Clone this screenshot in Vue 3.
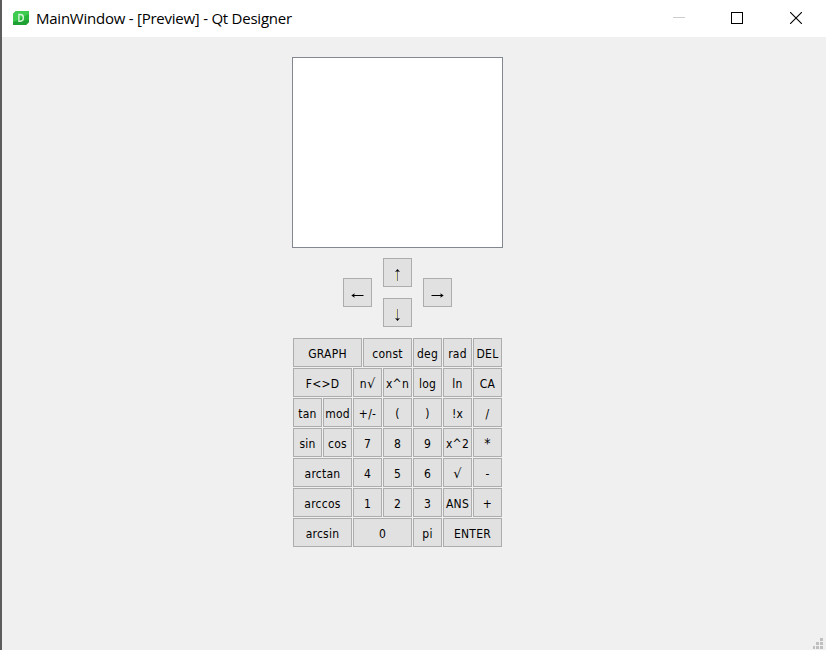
<script setup>
const keys = [
  ['GRAPH', 7], ['const', 5], ['deg', 3], ['rad', 3], ['DEL', 3],
  ['F<>D', 6], ['n√', 3], ['x^n', 3], ['log', 3], ['ln', 3], ['CA', 3],
  ['tan', 3], ['mod', 3], ['+/-', 3], ['(', 3], [')', 3], ['!x', 3], ['/', 3],
  ['sin', 3], ['cos', 3], ['7', 3], ['8', 3], ['9', 3], ['x^2', 3], ['*', 3],
  ['arctan', 6], ['4', 3], ['5', 3], ['6', 3], ['√', 3], ['-', 3],
  ['arccos', 6], ['1', 3], ['2', 3], ['3', 3], ['ANS', 3], ['+', 3],
  ['arcsin', 6], ['0', 6], ['pi', 3], ['ENTER', 6],
]
</script>

<template>
  <div class="window">
    <header class="titlebar">
      <svg class="logo" width="16" height="14" viewBox="0 0 16 14">
        <path d="M3 0H16V11L13 14H0V3Z" fill="#28b53c" />
        <path d="M3 0H16V3L0 11V3Z" fill="#3dcc50" />
        <path d="M0 11L16 9V11L13 14H0Z" fill="#1fa033" />
        <path d="M5.9 3.5H7.6Q10.4 3.5 10.4 6.8T7.6 10.2H5.9Z" fill="none" stroke="#d4f4d7" stroke-width="1.4" />
      </svg>
      <span class="title">MainWindow - [Preview] - Qt Designer</span>
      <div class="controls">
        <svg width="12" height="12" viewBox="0 0 12 12"><path d="M0 5.5H12" stroke="#ccc" /></svg>
        <svg width="12" height="12" viewBox="0 0 12 12"><rect x=".5" y=".5" width="11" height="11" fill="none" stroke="#000" /></svg>
        <svg class="close" width="12" height="12" viewBox="0 0 12 12"><path d="M0 0L12 12M12 0L0 12" stroke="#000" stroke-width="1.1" /></svg>
      </div>
    </header>
    <main class="body">
      <div class="display"></div>
      <div class="arrows">
        <button class="key up"><svg width="13" height="13" viewBox="0 0 13 13"><path d="M6.5 12V1" stroke="#77779a" /><path d="M5.5 12V3" stroke="#e9e39c" /><path d="M6.5 0L9 2.9L6.5 2.2L4 2.9Z" /></svg></button>
        <button class="key left"><svg width="13" height="13" viewBox="0 0 13 13"><path d="M1 6.5H12.5" stroke="#000" /><path d="M.3 6.5L3.7 4.3L3.1 6.5L3.7 8.7Z" /></svg></button>
        <button class="key right"><svg width="13" height="13" viewBox="0 0 13 13"><path d="M.5 6.5H12" stroke="#000" /><path d="M12.7 6.5L9.3 4.3L9.9 6.5L9.3 8.7Z" /></svg></button>
        <button class="key down"><svg width="13" height="13" viewBox="0 0 13 13"><path d="M6.5 0V11" stroke="#77779a" /><path d="M5.5 0V9" stroke="#e9e39c" /><path d="M6.5 12L9 9.1L6.5 9.8L4 9.1Z" /></svg></button>
      </div>
      <div class="keypad">
        <button v-for="([label, span]) in keys" :key="label" class="key" :class="'span-' + span">
          <span v-if="label.endsWith('√')">{{ label.slice(0, -1) }}<b class="root">√</b></span>
          <span v-else :class="{ star: label === '*' }">{{ label }}</span>
        </button>
      </div>
    </main>
    <svg class="grip" width="10" height="11" viewBox="0 0 10 11" fill="#bfbfbf">
      <path d="M7 0h3v3h-3zM3 4h3v3h-3zM7 4h3v3h-3zM0 8h2v3h-2zM3 8h3v3h-3zM7 8h3v3h-3z" />
    </svg>
  </div>
</template>

<style>
body { margin: 0; overflow: hidden; }
</style>

<style scoped>
.window {
  position: relative;
  box-sizing: border-box;
  width: 826px;
  height: 650px;
  border-left: 2px solid #5c5c5c;
  background: #f0f0f0;
}
.titlebar {
  display: flex;
  align-items: center;
  box-sizing: border-box;
  height: 37px;
  padding: 0 24px 0 11px;
  background: #fff;
}
.logo { margin-top: -1px; }
.title {
  margin: -2px 0 0 7px;
  font: 15px/20px "Open Sans", sans-serif;
  letter-spacing: -0.24px;
  color: #000;
  white-space: nowrap;
}
.controls { display: flex; gap: 46px; margin: 0 0 1px auto; }
.controls svg { display: block; }
.controls .close { margin-left: 1px; }
.body {
  display: flex;
  flex-direction: column;
  align-items: flex-start;
  padding: 20px 0 0 290px;
}
.display {
  box-sizing: border-box;
  width: 211px;
  height: 191px;
  border: 1px solid #828790;
  background: #fff;
}
.arrows {
  display: grid;
  grid-template-columns: repeat(3, 29px);
  grid-template-rows: 20px 9px 11px 9px 20px;
  column-gap: 11px;
  margin: 10px 0 0 51px;
}
.up { grid-area: 1 / 2 / 3 / 3; }
.left { grid-area: 2 / 1 / 5 / 2; }
.right { grid-area: 2 / 3 / 5 / 4; }
.down { grid-area: 4 / 2 / 6 / 3; }
.arrows svg { display: block; margin-top: 6px; }
.keypad {
  display: grid;
  grid-template-columns: repeat(21, 10px);
  grid-auto-rows: 29px;
  row-gap: 1px;
  margin: 11px 0 0 1px;
}
.key {
  display: flex;
  align-items: center;
  justify-content: center;
  box-sizing: border-box;
  height: 29px;
  padding: 0;
  border: 1px solid #adadad;
  border-radius: 0;
  background: #e1e1e1;
  color: #000;
  font: 12px/16px "DejaVu Sans Condensed", "DejaVu Sans", sans-serif;
  font-stretch: condensed;
  letter-spacing: 0.25px;
  white-space: nowrap;
}
.keypad .key { margin-right: 1px; }
.key span { margin-top: 2px; }
.key .root {
  font: 13px/14px "DejaVu Sans", sans-serif;
  letter-spacing: 0;
}
.key .star { margin-top: 0; font-size: 14px; }
.span-3 { grid-column: span 3; }
.span-5 { grid-column: span 5; }
.span-6 { grid-column: span 6; }
.span-7 { grid-column: span 7; }
.grip { position: absolute; right: 3px; bottom: 1px; }
</style>
